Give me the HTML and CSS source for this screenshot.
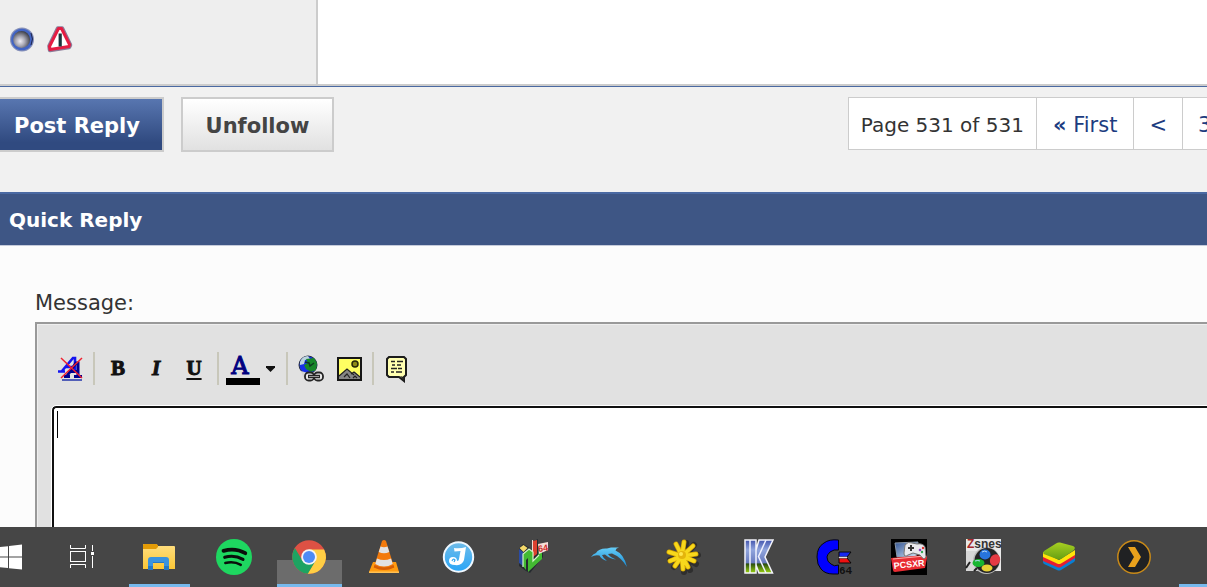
FILE: index.html
```
<!DOCTYPE html>
<html lang="en">
<head>
<meta charset="utf-8">
<title>Quick Reply</title>
<link rel="stylesheet" href="styles.css">
</head>
<body>
<main class="page">
  <section class="post">
    <div class="post-user">
      <svg class="post-icon" viewBox="0 0 26 28" role="img" aria-label="Offline">
        <defs><radialGradient id="orb" cx=".42" cy=".6" r=".6"><stop offset="0" stop-color="#f0eef5"/><stop offset=".45" stop-color="#aaa9b5"/><stop offset="1" stop-color="#40424c"/></radialGradient></defs>
        <circle cx="13" cy="14.500" r="12" fill="#8791b8"/>
        <circle cx="13" cy="14.500" r="10.800" fill="#4264c4"/>
        <circle cx="12.600" cy="14.500" r="8.500" fill="url(#orb)"/>
        <path d="M22 8q3 6 0 12" stroke="#20264b" fill="none"/>
      </svg>
      <svg class="post-icon" viewBox="0 0 26 28" role="img" aria-label="Report post">
        <path d="M11 3.500H15L23 20 22 22 3 25 2.500 21Z" fill="#8b7b98" stroke="#8b7b98" stroke-width="4.500" stroke-linejoin="round"/>
        <path d="M11.500 3.500H14.500L22.500 19.500 22 21.500 3 24.500 2.500 21.500Z" fill="#fff" stroke="#e51c43" stroke-width="3" stroke-linejoin="round"/>
        <path d="M13.200 8.500v13" stroke="#17333b" stroke-width="3.200"/>
      </svg>
    </div>
    <div class="post-body"></div>
  </section>

  <div class="thread-bar">
    <button class="btn btn-primary" type="button">Post Reply</button>
    <button class="btn btn-plain" type="button">Unfollow</button>
    <nav class="pager" aria-label="Pages">
      <span class="pager-cell pager-label">Page 531 of 531</span>
      <a class="pager-cell pager-first" href="#first"><b>«</b> First</a>
      <a class="pager-cell" href="#prev">&lt;</a>
      <a class="pager-cell pager-last" href="#page">3</a>
    </nav>
  </div>

  <h2 class="reply-head">Quick Reply</h2>

  <form class="reply">
    <label class="reply-label" for="message">Message:</label>
    <div class="editor">
      <div class="toolbar">
        <button class="tool" type="button" aria-label="Remove formatting">
          <svg width="26" height="26" viewBox="0 0 26 26">
            <path d="M5 15L16 2h2v13M9 11h9M1 15.500h7M13 15h6" fill="none" stroke="#1414f0" stroke-width="2.600"/>
            <path d="M10 20L19 7h2v13M12 15.500h9M7 20.500h6M17 20.500h8" fill="none" stroke="#000090" stroke-width="3"/>
            <path d="M5 24h20" stroke="#2233aa" stroke-width="1.500"/>
            <path d="M4 2L25 22M25 2L4 22" stroke="#f02030" stroke-width="1.500"/>
          </svg>
        </button>
        <span class="sep"></span>
        <button class="tool tool-b" type="button">B</button>
        <button class="tool tool-i" type="button">I</button>
        <button class="tool tool-u" type="button">U</button>
        <span class="sep"></span>
        <button class="tool tool-color" type="button" aria-label="Text colour">
          <span class="swatch">A</span>
          <svg width="9" height="6" viewBox="0 0 9 6"><path d="M0 0h9v1.500L4.500 6 0 1.500Z" fill="#111"/></svg>
        </button>
        <span class="sep"></span>
        <button class="tool" type="button" aria-label="Insert link">
          <svg width="28" height="28" viewBox="0 0 28 28">
            <circle cx="11" cy="10" r="9" fill="#1730e8" stroke="#273040"/>
            <path d="M3 7Q5 1 11 1L13 4 8 5 7 9 3 10Z" fill="#bcd4df"/>
            <path d="M9 4L17 3 20 8 19 15 14 17 9 14 7 10 11 8Z" fill="#168729"/>
            <path d="M8 7l4 1 1 3 4-3" fill="none" stroke="#0d3a20" stroke-width="1.500"/>
            <path d="M4 16l7 2v5l-5-1Z" fill="#d5d5d5"/>
            <g fill="#e8e8e8" stroke="#252525" stroke-width="1.800"><rect x="8" y="17.500" width="9" height="8" rx="3.500"/><rect x="17" y="17.500" width="9" height="8" rx="3.500"/></g>
            <path d="M11 21.500h12" stroke="#252525" stroke-width="3.500"/>
            <path d="M12 21.500h10" stroke="#999" stroke-width="1"/>
          </svg>
        </button>
        <button class="tool" type="button" aria-label="Insert image">
          <svg width="26" height="26" viewBox="0 0 26 26">
            <rect x="2" y="2" width="23" height="22" fill="#ffff62" stroke="#161616" stroke-width="2"/>
            <circle cx="19" cy="8" r="3" fill="#8e8a16" stroke="#272708" stroke-width="1.500"/>
            <path d="M3 23v-3l8-7 5 5 3-2 5 5v2Z" fill="#858585"/>
            <path d="M3 20l8-7 7 6M15 18l3-2 6 5M8 21l3-3 3 4M17 22l2-2 2 2" fill="none" stroke="#222" stroke-width="1.200"/>
          </svg>
        </button>
        <span class="sep"></span>
        <button class="tool" type="button" aria-label="Quote">
          <svg width="24" height="28" viewBox="0 0 24 28">
            <path d="M4 2h15l2 2v16l-2 2v4l-5-4H4l-2-2V4Z" fill="#ffffb0" stroke="#1c1c1c" stroke-width="2"/>
            <path d="M6 6.500h4m2 0h6M7 10h3m2 0h4M6 13.500h6m1 0h4M6 17h3m2 0h6" stroke="#222" stroke-width="1.700"/>
            <path d="M15 21l4 5v-4" fill="#222"/>
          </svg>
        </button>
      </div>
      <div class="field">
        <textarea class="message" id="message"></textarea>
        <span class="caret"></span>
      </div>
    </div>
  </form>
</main>

<nav class="taskbar" aria-label="Taskbar">
  <button class="task task-start" type="button" aria-label="Start">
    <svg width="22" height="37" viewBox="0 0 22 37"><path d="M0 7.500L8 6.700V17H0ZM9 6.500L22 5V17H9ZM0 18H8V28.500L0 27.700ZM9 18H22V30L9 28.700Z" fill="#fff" transform="translate(0 .5)"/></svg>
  </button>
  <button class="task" type="button" aria-label="Task view">
    <svg width="37" height="37" viewBox="0 0 37 37"><g fill="none" stroke="#fff"><path d="M4.500 6v3.500h15V6M4.500 29v-3.500h15V29"/><rect x="4.500" y="12.500" width="15" height="10"/><path d="M26.500 6v6M26.500 17v12"/></g><path d="M25 13h3v3h-3z" fill="#fff"/></svg>
  </button>
  <button class="task is-open" type="button" aria-label="File Explorer">
    <svg width="37" height="37" viewBox="0 0 37 37">
      <defs><linearGradient id="fold" x2="0" y2="1"><stop stop-color="#ffdf82"/><stop offset="1" stop-color="#fbc736"/></linearGradient></defs>
      <path d="M2 6q0-1 1-1h12l2 2h16q1 0 1 1v22H2Z" fill="url(#fold)"/>
      <path d="M2 6q0-1 1-1h12l2 1v2l-2 2H2Z" fill="#e39b06"/>
      <path d="M7 21q0-3 3-3h15q3 0 3 3v10h-5v-8H12v8H7Z" fill="#3a93de"/>
      <path d="M12 24h11v-1H12ZM7 27h5v4H7ZM23 27h5v4h-5Z" fill="#2478c4"/>
    </svg>
  </button>
  <button class="task" type="button" aria-label="Spotify">
    <svg width="37" height="37" viewBox="0 0 37 37"><circle cx="18" cy="18" r="18" fill="#1ed760"/><g fill="none" stroke="#0a0f0b" stroke-linecap="round"><path d="M7.500 11.800Q19.500 8.500 29.300 14.200" stroke-width="3.800"/><path d="M8.700 18.300Q18.500 15.500 27 20.400" stroke-width="3.100"/><path d="M9.300 24Q18 21.800 24.800 25.900" stroke-width="2.400"/></g></svg>
  </button>
  <button class="task is-active" type="button" aria-label="Chrome">
    <svg width="37" height="37" viewBox="0 0 37 37">
      <circle cx="18" cy="18" r="16.800" fill="#dd5144"/>
      <path d="M18 10.500H33.100A16.800 16.800 0 0 1 16.500 34.730L24.500 21.750Z" fill="#ffce44"/>
      <path d="M3.900 8.900L11.500 21.750Q18 26 24.500 21.750L16.800 34.760A16.800 16.800 0 0 1 3.900 8.900Z" fill="#1ea362"/>
      <circle cx="18" cy="18" r="7.800" fill="#f4f4f4"/><circle cx="18" cy="18" r="6" fill="#4c8bf5"/>
    </svg>
  </button>
  <button class="task" type="button" aria-label="VLC">
    <svg width="37" height="37" viewBox="0 0 37 37">
      <path d="M7 23h23l3 10q0 1-1 1H4q-1 0-1-1Z" fill="#ff9b10"/><path d="M3 32.500h30v1.500H3Z" fill="#ffc052"/>
      <path d="M16 2q2-2 4 0L28 28q-10 6-20 0Z" fill="#f37a0b"/>
      <path d="M14.500 7.500q3.500 1.500 7 0l1.800 5.500q-5.300 2.500-10.600 0ZM11 19.500q7 3 14 0l1.800 5.500q-8.800 5-17.600 0Z" fill="#e2e2e2"/>
      <path d="M8.500 26q9.500 5 19 0l.8 2.500q-10 5-20.600 0Z" fill="#d65e05"/>
    </svg>
  </button>
  <button class="task" type="button" aria-label="JDownloader">
    <svg width="37" height="37" viewBox="0 0 37 37"><defs><linearGradient id="jb" x2="0" y2="1"><stop stop-color="#70bce9"/><stop offset="1" stop-color="#28a5f7"/></linearGradient></defs><circle cx="17.500" cy="18" r="14.700" fill="url(#jb)" stroke="#f0f8ff" stroke-width="2"/><path d="M13 9q6 1 12-1l-2 13Q21 27 14 26q-6 0-6-4 0-4 4-4 4 0 4 4 2 0 2-2l1.500-8-6 .5Z" fill="#fff"/><path d="M11 22q1-3 3-1l-1 2" fill="none" stroke="#35a8ef" stroke-width="1.200"/></svg>
  </button>
  <button class="task" type="button" aria-label="Project64">
    <svg width="37" height="37" viewBox="0 0 37 37">
      <path d="M3 9l4-4 7 4v4l4 5V2l4-2v16l5-4v6L14 34l-4-2-7-5Z" fill="#262b30"/>
      <path d="M3 10l4 3v14l-4-3Z" fill="#2b4ca5"/><path d="M3.500 9l4-3 4 3-4 4Z" fill="#f5d96a"/>
      <path d="M17 2l4-1v14l-4 3Z" fill="#dd402f"/><path d="M16.500 1v14" stroke="#f0d9d0" stroke-width="1"/>
      <path d="M7 15l6-5 4 3v9l5-5 1-4 3-2v9L12 33v-14l-2 2v10l-3-4Z" fill="#43ba32"/><path d="M7 28V15l6-5 4 3v9l6-6" fill="none" stroke="#d4f3ca" stroke-width="1.200"/>
      <path d="M22 5l10-2v8l-9 4Z" fill="#f7dfd9"/><text x="22.500" y="13" class="n64" transform="rotate(-9 22 13)">64</text>
    </svg>
  </button>
  <button class="task" type="button" aria-label="Dolphin">
    <svg width="37" height="37" viewBox="0 0 37 37"><defs><linearGradient id="dol" x2="0" y2="1"><stop stop-color="#65cdf7"/><stop offset="1" stop-color="#188bd4"/></linearGradient></defs><path d="M0 18Q2 15 5 14 8 9 16 9.500L20 8.500H28Q25 9 24.500 11.500 33 15 36 28 30 18 21 14.500L17 15Q19 18 25 20.500 19 20 14 15.500L11 16Q12 19 16 22 10 20 8.500 16.500 4 15.500 0 18Z" fill="url(#dol)"/></svg>
  </button>
  <button class="task" type="button" aria-label="Flower">
    <svg width="37" height="37" viewBox="0 0 37 37">
      <path d="M18 18L20 4M18 18L28 6M18 18L32 16M18 18L30 25M18 18L24 31M18 18L18 33M18 18L8 28M18 18L4 21" stroke="#222" stroke-width="6" stroke-linecap="round" opacity=".65"/>
      <path d="M16 17L18 3M16 17L10 5M16 17L27 7M16 17L3 13M16 17L30 15M16 17L28 22M16 17L4 22M16 17L9 27M16 17L17 30M16 17L22 28" stroke="#d0a000" stroke-width="5" stroke-linecap="round"/>
      <path d="M16 17L18 3M16 17L10 5M16 17L27 7M16 17L3 13M16 17L30 15M16 17L28 22M16 17L4 22M16 17L9 27M16 17L17 30M16 17L22 28" stroke="#f8d81c" stroke-width="3.600" stroke-linecap="round"/>
      <circle cx="16" cy="16" r="4" fill="#e4b50c"/><circle cx="15" cy="15" r="2" fill="#ffe64e"/>
    </svg>
  </button>
  <button class="task" type="button" aria-label="Kega Fusion">
    <svg width="37" height="37" viewBox="0 0 37 37"><defs><linearGradient id="kg" x2="0" y2="1"><stop stop-color="#4254ae"/><stop offset=".3" stop-color="#91a5dd"/><stop offset=".7" stop-color="#6678bc"/><stop offset=".72" stop-color="#294b10"/><stop offset="1" stop-color="#9bd510"/></linearGradient></defs>
      <path d="M4 1H15V11L18 1H32L24 18 31.500 34H18L15 26V34H4Z" fill="url(#kg)" stroke="#f3f3fa" stroke-width="1.500"/><path d="M9 1V34M25 1L17.500 17.500 25 34M15 11V26" fill="none" stroke="#f0f2ff" stroke-width="1.500"/></svg>
  </button>
  <button class="task" type="button" aria-label="Commodore 64">
    <svg width="37" height="37" viewBox="0 0 37 37"><path d="M22.500 1V11Q18 10 14 13 11 16 11 18 11 23 15 25 18 28 22.500 26V35H17Q9 35 5 30 1 26 1 18 1 8 8 4 13 0 22.500 1Z" fill="#00f" stroke="#050510"/><path d="M23 13h12l-4 5h-8Z" fill="#1727f0" stroke="#080808"/><path d="M23 19h8l4 5H23Z" fill="#ef1010" stroke="#080808"/><path d="M23 18.500h8" stroke="#ddd" stroke-width="1.500"/><text class="c64" x="23" y="35">64</text></svg>
  </button>
  <button class="task" type="button" aria-label="PCSXR">
    <svg width="37" height="37" viewBox="0 0 37 37"><defs><linearGradient id="scr" x2="1" y2="1"><stop stop-color="#315493"/><stop offset="1" stop-color="#d4e4f6"/></linearGradient></defs><rect width="36" height="36"/><path d="M4 4l23-1-2 15H6Z" fill="url(#scr)" stroke="#8795a5"/><path d="M0 19l34-3q2 0 2 3l-2 10-30 4q-2 0-2-2Z" fill="#e92b32"/><path d="M2 20l32-3" stroke="#ffaaa5"/><path d="M14 6q3-4 7-2l5 1q6-1 8 3l1 10q-2 4-6-2l-7-2-5 2q-4 3-4-2Z" fill="#e9e9ed" stroke="#777"/><path d="M17 9h6M20 6v6" stroke="#333" stroke-width="2"/><circle cx="29" cy="11" r="1.300" fill="#8a42c0"/><circle cx="32" cy="9" r="1.200" fill="#d33"/><circle cx="31" cy="13" r="1.200" fill="#3a5"/><text class="pcsxr" x="3" y="30" transform="rotate(-6 3 30)">PCSXR</text></svg>
  </button>
  <button class="task" type="button" aria-label="ZSNES">
    <svg width="37" height="37" viewBox="0 0 37 37"><rect width="35" height="32" fill="#e8e8e8"/><path d="M0 12h14v20H0Z" fill="#d7d7d7"/><circle cx="20.500" cy="21.500" r="13.500" fill="#bbb"/><circle cx="21" cy="21.500" r="12.500" fill="#242424"/><path d="M0 29l4-6M8 32l3-3" stroke="#222" stroke-width="2"/><ellipse cx="19" cy="15.500" rx="5.500" ry="5" fill="#2774dd"/><ellipse cx="29" cy="21" rx="5" ry="6" fill="#e43a43" transform="rotate(25 29 21)"/><ellipse cx="12.500" cy="24" rx="6" ry="4" fill="#18b630"/><ellipse cx="21" cy="29" rx="5.500" ry="3.500" fill="#e8d235"/><path d="M16 13q3-2 5 0M9 22q3-1 5 0" stroke="#b7d9f7" fill="none"/><text class="zsnes" x="1" y="9"><tspan fill="#a6272b">Z</tspan>snes</text></svg>
  </button>
  <button class="task" type="button" aria-label="BlueStacks">
    <svg width="37" height="37" viewBox="0 0 37 37"><defs><linearGradient id="bs" x2="0" y2="1"><stop stop-color="#a8d022"/><stop offset="1" stop-color="#659f12"/></linearGradient></defs><path d="M2 19l16 7 16-10v5q0 1-1 2L20 31q-2 1-4 0L3 25q-1-1-1-2Z" fill="#087fd3"/><path d="M2 17l16 8 16-11v5L20 28q-2 1-4 0L2 22Z" fill="#e51e32"/><path d="M2 13l16 8 16-10v5L20 24.500q-2 1-4 0L2 18Z" fill="#ffe40a"/><path d="M3 12L15 4.500q2-1.500 4-1l13 3.500q3 1 1 4L21 19.500q-2 1.500-4 1L4 15.500q-3-1-1-3.500Z" fill="url(#bs)"/></svg>
  </button>
  <button class="task" type="button" aria-label="Plex">
    <svg width="37" height="37" viewBox="0 0 37 37"><circle cx="18" cy="18" r="16.200" fill="#202123" stroke="#c98a18" stroke-width="1.500"/><path d="M12 8h7l6 10-6 10h-7l6-10Z" fill="#e9a11c"/></svg>
  </button>
  <button class="task is-open" type="button" aria-label="More"></button>
</nav>
</body>
</html>
```
FILE: styles.css
```
* { box-sizing: border-box; }

body {
  margin: 0;
  height: 100vh;
  display: flex;
  flex-direction: column;
  overflow: hidden;
  background: #f1f1f1;
  color: #333;
  font-family: Verdana, "DejaVu Sans", sans-serif;
  font-size: 20px;
}

button { font: inherit; margin: 0; }

.page {
  flex: 1;
  min-height: 0;
  overflow: hidden;
}

/* Post */
.post {
  display: flex;
  height: 86px;
  border-bottom: 2px solid #ccc;
}
.post-user {
  display: flex;
  align-items: center;
  gap: 12px;
  width: 318px;
  padding: 0 0 6px 9px;
  background: #eee;
  border-right: 2px solid #ccc;
}
.post-icon { width: 26px; height: 28px; }
.post-body { flex: 1; background: #fff; }

/* Thread actions */
.thread-bar {
  display: flex;
  align-items: flex-start;
  height: 106px;
  padding-top: 10px;
  border-top: 1px solid #4a69a2;
}
.btn {
  height: 55px;
  border: 2px solid #ccc;
  font-size: 21px;
  font-weight: bold;
}
.btn-primary {
  width: 164px;
  padding: 2px 8px 0 0;
  border-left: 0;
  color: #fff;
  background: linear-gradient(#5876b0, #304a80 85%);
}
.btn-plain {
  width: 153px;
  margin-left: 17px;
  padding: 2px 0 0;
  color: #444;
  background: linear-gradient(#fff, #e1e1e1);
}
.pager {
  display: flex;
  height: 53px;
  margin-left: auto;
  background: #fff;
  border: 1px solid #ccc;
  border-right: 0;
}
.pager-cell {
  padding: 0 15px;
  border-right: 1px solid #ccc;
  color: #1c3c80;
  font-size: 21px;
  line-height: 54px;
  text-decoration: none;
  white-space: nowrap;
}
.pager-label { padding: 0 12px; color: #333; font-size: 20px; }
.pager-first { padding: 0 16px; }
.pager-last {
  width: 24px;
  padding-right: 0;
  border-right: 0;
  overflow: hidden;
}

/* Quick reply */
.reply-head {
  height: 54px;
  margin: 0;
  padding-left: 9px;
  color: #fff;
  background: #3e5685;
  border-top: 2px solid #4a69a2;
  border-bottom: 1px solid #c5cbdb;
  font-size: 20px;
  line-height: 52px;
}
.reply {
  padding: 42px 0 0 35px;
  background: #fcfcfc;
}
.reply-label {
  display: block;
  height: 34px;
  font-size: 21px;
  line-height: 30px;
}
.editor {
  padding: 28px 0 0 14px;
  background: #e1e1e1;
  border: 2px solid #999;
  border-width: 2px 0 0 2px;
  box-shadow: inset 1px 1px #eee;
}
.toolbar {
  display: flex;
  height: 33px;
  margin-bottom: 21px;
}
.tool {
  display: flex;
  align-items: center;
  justify-content: center;
  width: 38px;
  padding: 0;
  border: 0;
  background: none;
  color: #111;
  font-family: "Liberation Serif", serif;
  font-size: 21px;
}
.tool-b,
.tool-i,
.tool-u {
  font-weight: bold;
  -webkit-text-stroke: 1px #111;
}
.tool-i { font-style: italic; }
.tool-u { text-decoration: underline; text-underline-offset: 3px; }
.tool-color { width: 59px; gap: 6px; justify-content: flex-start; padding-left: 3px; }
.swatch {
  width: 34px;
  height: 33px;
  padding-right: 6px;
  border-bottom: 7px solid #000;
  color: #000080;
  font-family: "DejaVu Serif", serif;
  font-size: 24px;
  line-height: 28px;
  -webkit-text-stroke: 1px #000080;
}
.sep { width: 2px; margin: 0 4px; background: #c8c7ba; }
.field { position: relative; padding-left: 1px; }
.message {
  display: block;
  width: 100%;
  height: 220px;
  padding: 4px;
  border: 2px solid #101010;
  border-right: 0;
  border-radius: 4px 0 0 4px;
  outline: 1px solid #fff;
  background: #fff;
  font: inherit;
  resize: none;
}
.caret {
  position: absolute;
  top: 5px;
  left: 6px;
  width: 1px;
  height: 27px;
  background: #000;
}

/* Taskbar */
.taskbar {
  display: flex;
  flex: none;
  height: 60px;
  overflow: hidden;
  background: #464646;
}
.task {
  position: relative;
  flex: none;
  display: flex;
  align-items: flex-start;
  justify-content: center;
  width: 75px;
  padding: 12px 0 0;
  border: 0;
  background: none;
}
.task svg { position: relative; overflow: visible; }
.task-start { width: 47px; justify-content: flex-start; }
.is-open::before,
.is-active::before {
  content: "";
  position: absolute;
  bottom: 0;
  left: 7px;
  right: 7px;
  height: 3px;
  background: #76b9ed;
}
.is-active::before {
  box-sizing: border-box;
  left: 5px;
  right: 5px;
  height: 27px;
  background: #6c6c6c;
  border-bottom: 3px solid #76b9ed;
}
.n64 { font: bold 9px "Liberation Sans", sans-serif; fill: #cf2927; }
.c64 { font: bold 11px "Liberation Mono", monospace; fill: #111; }
.pcsxr { font: bold 9px "Liberation Sans", sans-serif; fill: #fff; }
.zsnes { font: bold 12px "Liberation Sans", sans-serif; fill: #333; }
```
